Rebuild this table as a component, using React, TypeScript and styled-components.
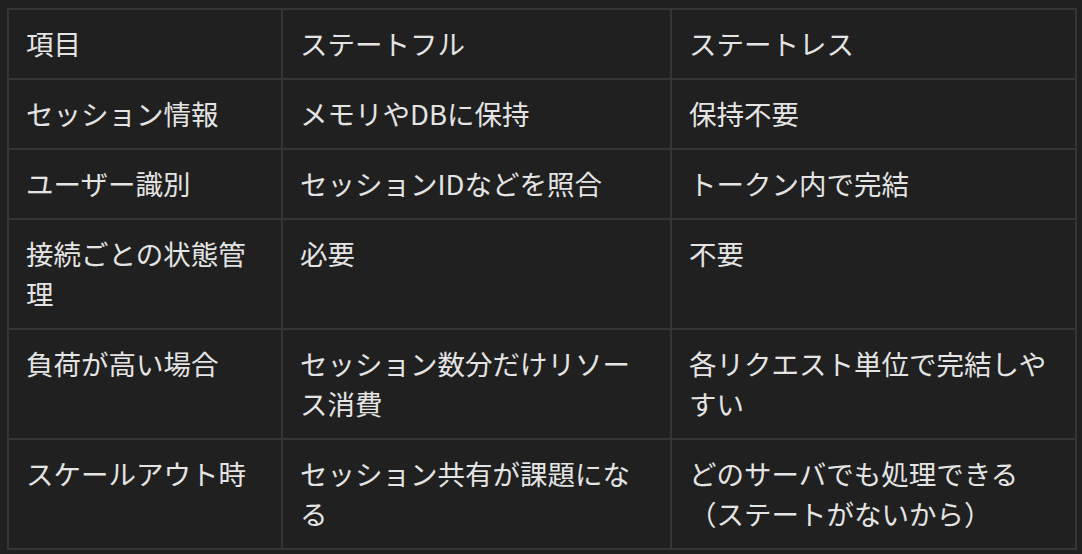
import React from "react";
import styled, { createGlobalStyle } from "styled-components";

const Global = createGlobalStyle`
  html, body {
    margin: 0;
    padding: 0;
    background: #202020;
  }
  body {
    font-family: "Noto Sans CJK JP", "Noto Sans", sans-serif;
  }
`;

const Page = styled.div`
  padding: 8px 5px 4px 7px;
  background: #202020;
  min-height: 554px;
  box-sizing: border-box;
`;

const Grid = styled.div`
  display: grid;
  grid-template-columns: 272px 387px 403px;
  grid-auto-rows: auto;
  gap: 2px;
  padding: 2px;
  background: #353535;
  width: max-content;
`;

const Cell = styled.div<{ $tall?: boolean }>`
  background: #202020;
  color: #e4e4e4;
  font-size: 27.5px;
  line-height: 40px;
  padding: 13px 22px 15px 17px;
  min-height: ${(p) => (p.$tall ? "80px" : "40px")};
  word-break: normal;
  line-break: strict;
`;

const rows: [string, string, string][] = [
  ["項目", "ステートフル", "ステートレス"],
  ["セッション情報", "メモリやDBに保持", "保持不要"],
  ["ユーザー識別", "セッションIDなどを照合", "トークン内で完結"],
  ["接続ごとの状態管理", "必要", "不要"],
  ["負荷が高い場合", "セッション数分だけリソース消費", "各リクエスト単位で完結しやすい"],
  ["スケールアウト時", "セッション共有が課題になる", "どのサーバでも処理できる（ステートがないから）"],
];

export default function App() {
  return (
    <>
      <Global />
      <Page>
        <Grid>
          {rows.map((r, i) =>
            r.map((c, j) => (
              <Cell key={`${i}-${j}`} $tall={i >= 3}>
                {c}
              </Cell>
            ))
          )}
        </Grid>
      </Page>
    </>
  );
}
